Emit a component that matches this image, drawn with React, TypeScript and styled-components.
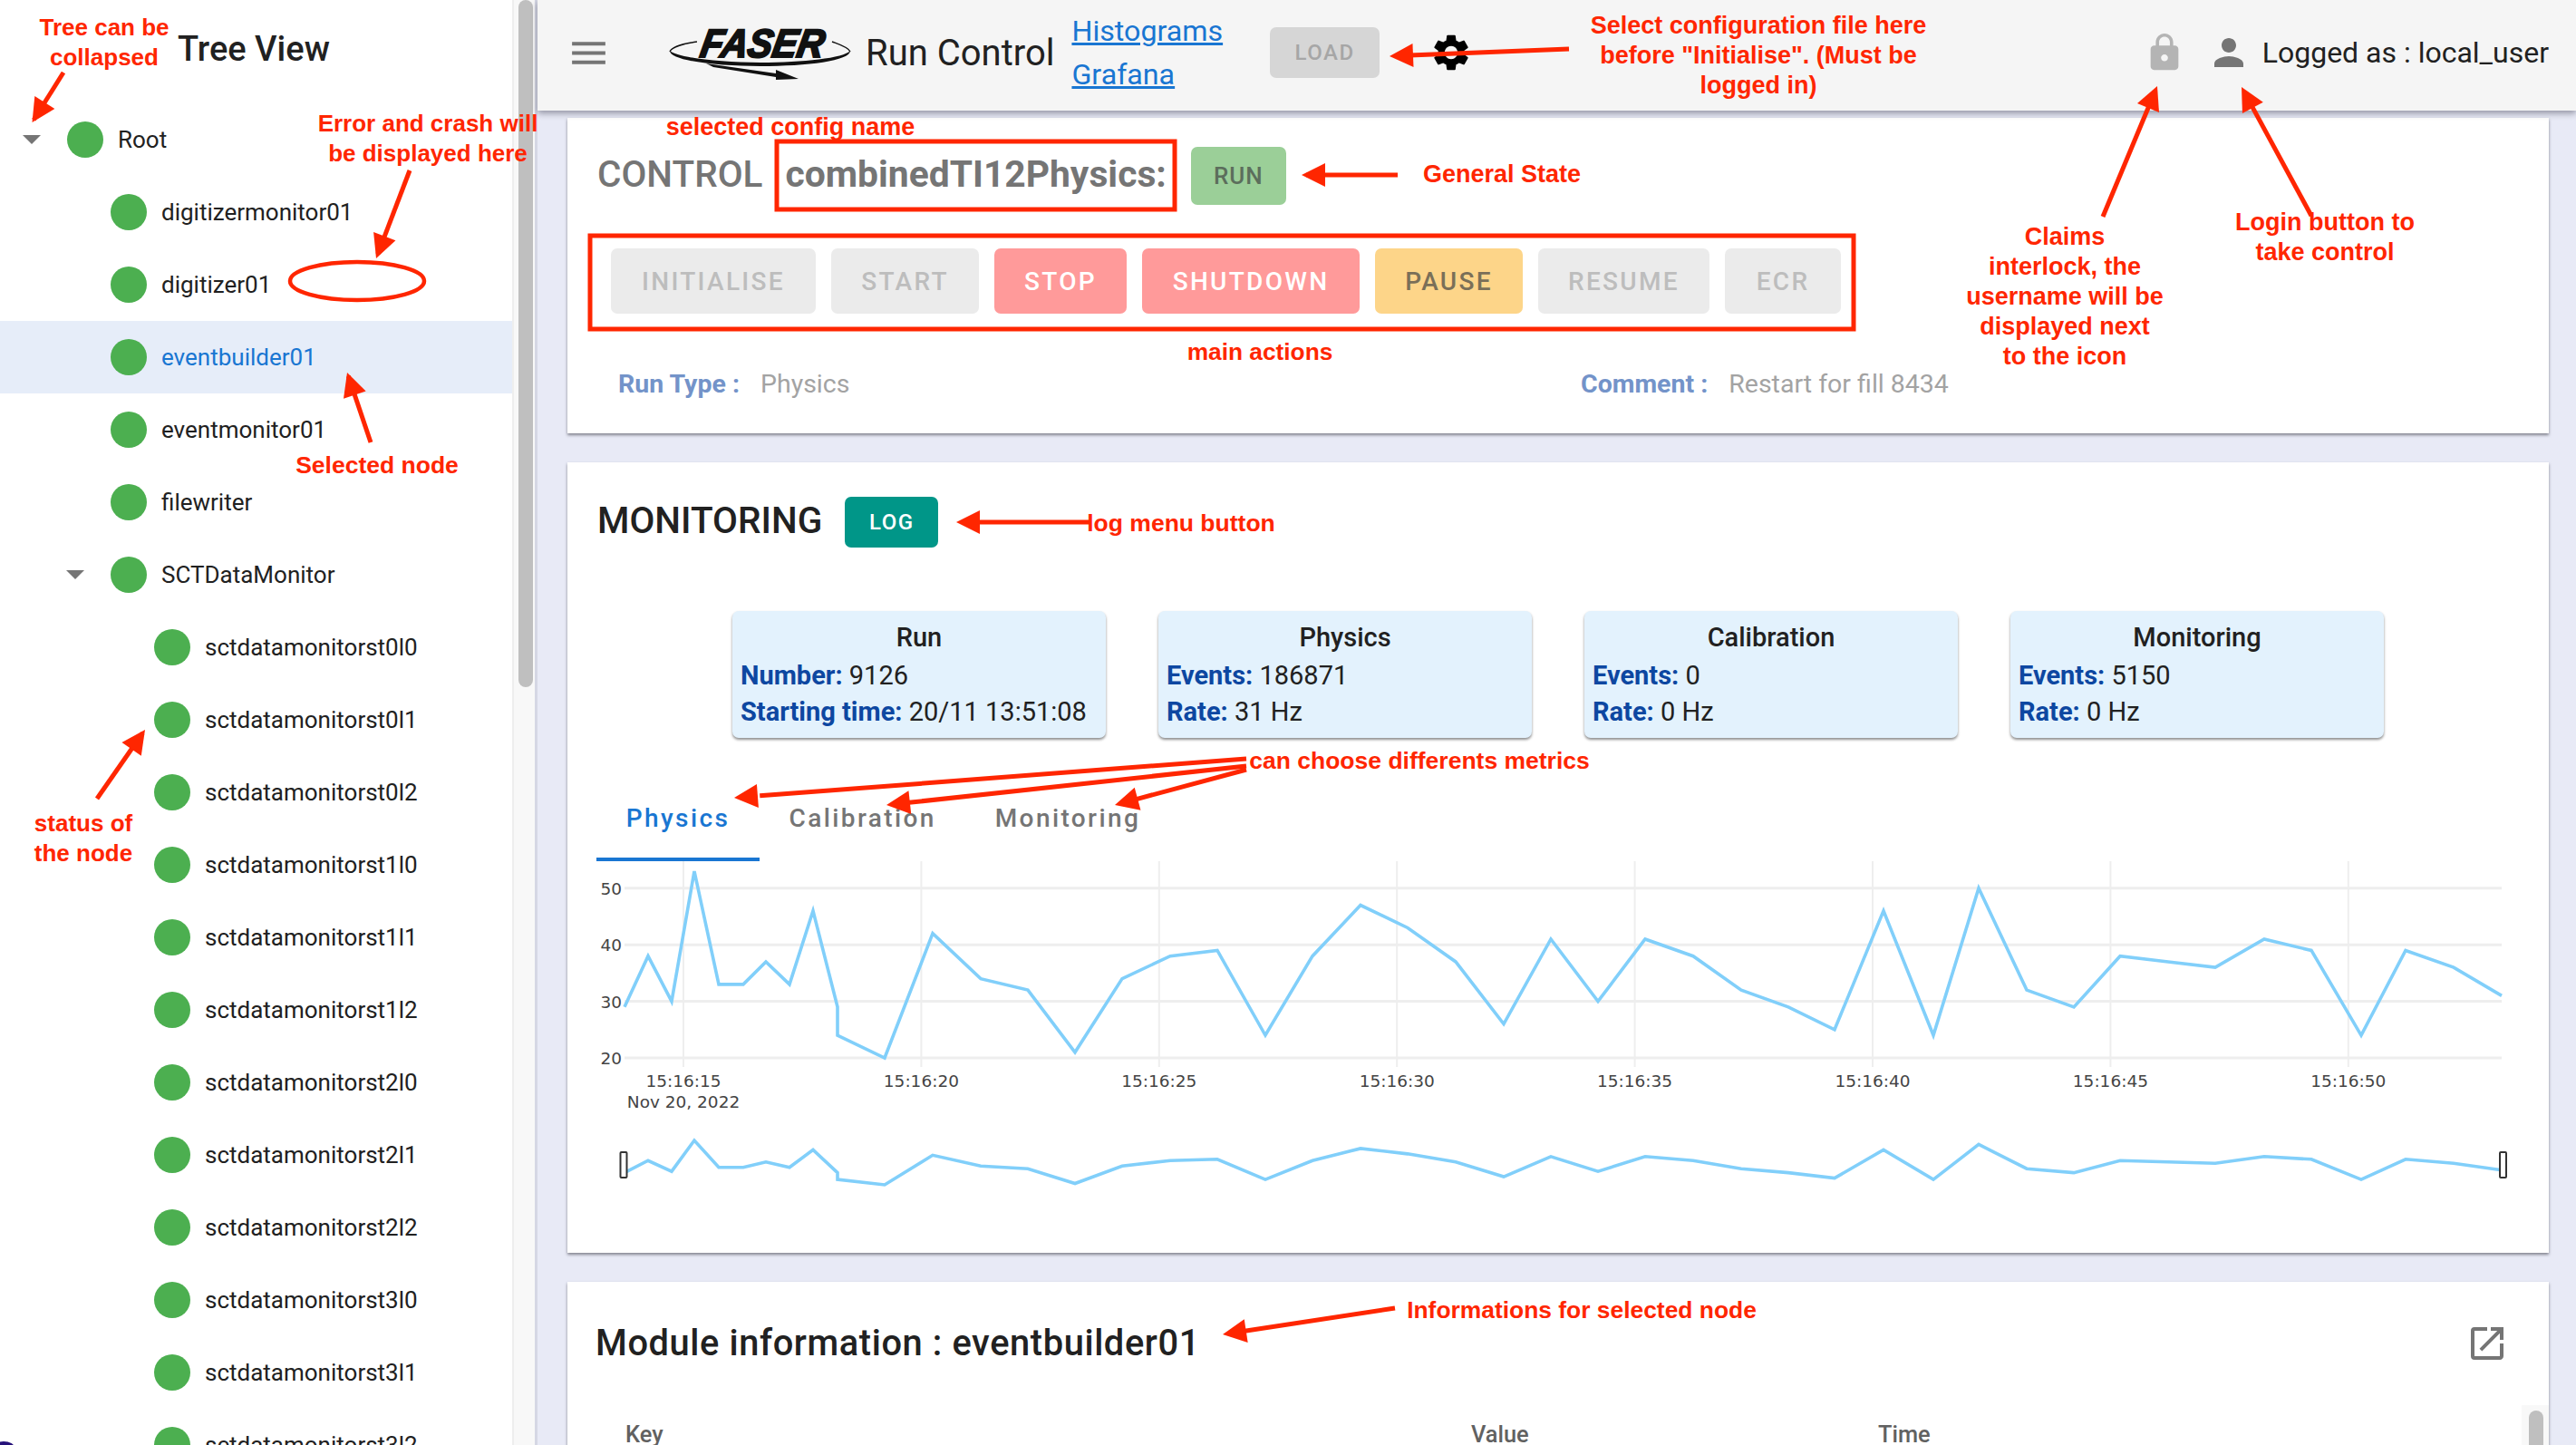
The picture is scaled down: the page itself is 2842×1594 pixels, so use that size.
import React from 'react';
import styled, { createGlobalStyle } from 'styled-components';
import { MdLock, MdMenu, MdOpenInNew, MdPerson, MdSettings } from 'react-icons/md';

const GlobalStyle = createGlobalStyle`
  html, body {
    margin: 0;
    width: 2842px;
    height: 1594px;
    overflow: hidden;
    background: #e8eaf6;
    font-family: Roboto, "Liberation Sans", sans-serif;
    color: #212121;
  }
  * { box-sizing: border-box; }
`;

const Page = styled.div`
  position: relative;
  display: flex;
  width: 2842px;
  height: 1594px;
  overflow: hidden;
`;

/* ---------- tree ---------- */

const Sidebar = styled.aside`
  display: flex;
  flex: none;
  width: 593px;
  background: #fff;
  border-right: 3px solid #d5d7e4;
`;

const TreePane = styled.div`
  width: 565px;
  flex: none;
`;

const TreeTitle = styled.h2`
  height: 114px;
  margin: 0;
  padding: 33px 0 0 196px;
  font-size: 38px;
  line-height: 42px;
  font-weight: 500;
`;

const TreeRow = styled.div<{ $level: number; $selected?: boolean }>`
  display: flex;
  align-items: center;
  height: 80px;
  padding-left: ${(p) => p.$level * 48}px;
  background: ${(p) => (p.$selected ? '#e6edf9' : 'transparent')};
  color: ${(p) => (p.$selected ? '#1976d2' : '#212121')};
  font-size: 26px;
  white-space: nowrap;
`;

const Expander = styled.span<{ $open?: boolean }>`
  flex: none;
  width: 74px;
  height: 0;
  display: flex;
  &::before {
    content: '';
    display: ${(p) => (p.$open ? 'block' : 'none')};
    margin: -5px 0 0 25px;
    border-left: 10px solid transparent;
    border-right: 10px solid transparent;
    border-top: 10px solid #757575;
  }
`;

const StatusDot = styled.span`
  flex: none;
  width: 40px;
  height: 40px;
  margin-right: 16px;
  border-radius: 50%;
  background: #4caf50;
`;

const ScrollTrack = styled.div`
  flex: none;
  width: 25px;
  padding: 0 2px 0 5px;
  background: #f8f8f8;
  border-left: 2px solid #eeeeee;
`;

const ScrollThumb = styled.div<{ $height: number }>`
  width: 16px;
  height: ${(p) => p.$height}px;
  border-radius: 8px;
  background: #bfbfbf;
`;

const CornerMark = styled.div`
  position: absolute;
  left: -8px;
  bottom: -10px;
  width: 24px;
  height: 14px;
  border-radius: 50%;
  background: #26127a;
`;

/* ---------- top bar ---------- */

const Main = styled.main`
  flex: 1;
  min-width: 0;
  display: flex;
  flex-direction: column;
`;

const TopBar = styled.header`
  position: relative;
  z-index: 2;
  flex: none;
  display: flex;
  align-items: center;
  height: 122px;
  padding: 0 30px 6px 32px;
  background: #f5f5f5;
  box-shadow: 0 3px 7px rgba(40, 40, 60, 0.45);
`;

const MenuIcon = styled(MdMenu)`
  flex: none;
  color: #757575;
`;

const Logo = styled.svg`
  flex: none;
  width: 215px;
  height: 65px;
  margin: 0 0 0 57px;
`;

const AppName = styled.span`
  margin-left: 9px;
  font-size: 40px;
  white-space: nowrap;
`;

const LinkStack = styled.nav`
  display: flex;
  flex-direction: column;
  gap: 12px;
  margin-left: 19px;
`;

const NavLink = styled.a`
  color: #1976d2;
  font-size: 32.2px;
  line-height: 36px;
  text-decoration: underline;
`;

const LoadButton = styled.button`
  width: 121px;
  height: 56px;
  margin-left: 52px;
  border: 0;
  border-radius: 7px;
  background: #d6d6d6;
  color: #a6a6a6;
  font: 500 24px Roboto, sans-serif;
  letter-spacing: 1.5px;
`;

const GearIcon = styled(MdSettings)`
  flex: none;
  margin-left: 55px;
  color: #000;
`;

const UserGroup = styled.div`
  display: flex;
  align-items: center;
  margin-left: auto;
`;

const LockIcon = styled(MdLock)`
  color: #b4b4b4;
`;

const PersonIcon = styled(MdPerson)`
  margin-left: 24px;
  color: #757575;
`;

const UserName = styled.span`
  margin-left: 13px;
  font-size: 32px;
  white-space: nowrap;
`;

/* ---------- cards ---------- */

const Content = styled.div`
  flex: 1;
  min-height: 0;
  display: flex;
  flex-direction: column;
  gap: 32px;
  padding: 8px 30px 0 33px;
`;

const Card = styled.section<{ $height?: number }>`
  flex: ${(p) => (p.$height ? 'none' : '1')};
  height: ${(p) => (p.$height ? `${p.$height}px` : 'auto')};
  background: #fff;
  box-shadow: 0 2px 3px rgba(30, 30, 40, 0.5);
`;

const TitleRow = styled.div<{ $top: number }>`
  display: flex;
  align-items: center;
  padding: ${(p) => p.$top}px 0 0 33px;
`;

const SectionTitle = styled.h2<{ $muted?: boolean }>`
  margin: 0;
  padding-bottom: 3px;
  font-size: 40.5px;
  line-height: 64px;
  font-weight: 500;
  color: ${(p) => (p.$muted ? '#757575' : '#212121')};
  white-space: nowrap;
`;

const ConfigName = styled.span`
  margin-left: 25px;
  padding-bottom: 3px;
  color: #757575;
  font-size: 40.8px;
  font-weight: 700;
  white-space: nowrap;
`;

const StateChip = styled.span`
  display: flex;
  align-items: center;
  justify-content: center;
  width: 105px;
  height: 64px;
  margin-left: 27px;
  border-radius: 7px;
  background: #9bcf98;
  color: #5c6e5c;
  font-size: 26px;
  font-weight: 500;
  letter-spacing: 1px;
`;

const ActionRow = styled.div`
  display: flex;
  gap: 17px;
  margin: 47px 0 0 48px;
`;

const toneColours = {
  off: ['#ebebeb', '#bdbdbd'],
  danger: ['#ff9a9a', '#ffffff'],
  warn: ['#fdd589', '#7a6f58'],
};

const ActionButton = styled.button<{ $tone: keyof typeof toneColours; $width: number }>`
  width: ${(p) => p.$width}px;
  height: 72px;
  padding: 0;
  border: 0;
  border-radius: 7px;
  background: ${(p) => toneColours[p.$tone][0]};
  color: ${(p) => toneColours[p.$tone][1]};
  font: 500 28px Roboto, sans-serif;
  letter-spacing: 2.3px;
`;

const MetaRow = styled.div`
  display: grid;
  grid-template-columns: 1062px 1fr;
  margin-top: 60px;
  padding-left: 56px;
  font-size: 28.5px;
  line-height: 36px;
`;

const MetaLabel = styled.b`
  margin-right: 23px;
  color: #7393c9;
  font-weight: 700;
`;

const MetaValue = styled.span`
  color: #a3a3a3;
`;

const LogButton = styled.button`
  width: 103px;
  height: 56px;
  margin-left: 25px;
  border: 0;
  border-radius: 7px;
  background: #009688;
  color: #fff;
  font: 500 24px Roboto, sans-serif;
  letter-spacing: 1.5px;
`;

const StatRow = styled.div`
  display: flex;
  justify-content: center;
  gap: 58px;
  margin-top: 65px;
`;

const StatCard = styled.div`
  width: 412px;
  height: 140px;
  padding: 9px 9px 0;
  border-radius: 7px;
  background: #e3f2fd;
  box-shadow: 0 2px 3px rgba(0, 0, 0, 0.45);
  font-size: 29px;
  line-height: 40px;
  white-space: nowrap;
`;

const StatTitle = styled.div`
  margin-bottom: 2px;
  text-align: center;
  font-weight: 500;
`;

const StatLabel = styled.b`
  color: #0d47a1;
  font-weight: 700;
`;

const TabBar = styled.div`
  display: flex;
  height: 96px;
  margin: 40px 0 0 32px;
`;

const Tab = styled.div<{ $active?: boolean }>`
  display: flex;
  align-items: center;
  justify-content: center;
  min-width: 180px;
  padding: 5px 32.5px 0;
  border-bottom: 4px solid ${(p) => (p.$active ? '#1976d2' : 'transparent')};
  color: ${(p) => (p.$active ? '#1976d2' : '#757575')};
  font-size: 28px;
  font-weight: 500;
  letter-spacing: 2.4px;
`;

const ChartSvg = styled.svg`
  display: block;
  width: 2186px;
  height: 431px;
`;

const ModuleHead = styled.div`
  display: flex;
  align-items: center;
  justify-content: space-between;
  padding: 43px 44px 0 31px;
`;

const ModuleTitle = styled.h2`
  margin: 0;
  font-size: 39.8px;
  line-height: 50px;
  font-weight: 500;
  letter-spacing: 0.6px;
`;

const OpenIcon = styled(MdOpenInNew)`
  color: #757575;
`;

const TableWrap = styled.div`
  display: flex;
  margin-top: 43px;
`;

const TableHead = styled.div`
  flex: 1;
  display: grid;
  grid-template-columns: 933px 449px 1fr;
  padding: 17px 0 0 64px;
  color: #616161;
  font-size: 25.4px;
  line-height: 30px;
  font-weight: 500;
`;

const TableTrack = styled.div`
  flex: none;
  width: 30px;
  height: 44px;
  padding: 6px 6px 0 8px;
  background: #f8f8f8;
`;

const TableThumb = styled.div`
  width: 16px;
  height: 60px;
  border-radius: 8px;
  background: #bfbfbf;
`;

/* ---------- red notes drawn over the page ---------- */

const Overlay = styled.svg`
  position: absolute;
  z-index: 3;
  top: 0;
  left: 0;
  width: 2842px;
  height: 1594px;
  pointer-events: none;
`;

const Note = styled.div<{ $x: number; $y: number; $size?: number }>`
  position: absolute;
  z-index: 4;
  left: ${(p) => p.$x}px;
  top: ${(p) => p.$y}px;
  transform: translate(-50%, -50%);
  color: #ff2600;
  font-family: "Liberation Sans", Arial, sans-serif;
  font-size: ${(p) => p.$size ?? 26}px;
  line-height: 33px;
  font-weight: 700;
  text-align: center;
  white-space: pre;
`;

const TREE: { name: string; level: number; open?: boolean; selected?: boolean }[] = [
  { name: 'Root', level: 0, open: true },
  { name: 'digitizermonitor01', level: 1 },
  { name: 'digitizer01', level: 1 },
  { name: 'eventbuilder01', level: 1, selected: true },
  { name: 'eventmonitor01', level: 1 },
  { name: 'filewriter', level: 1 },
  { name: 'SCTDataMonitor', level: 1, open: true },
  ...['0l0', '0l1', '0l2', '1l0', '1l1', '1l2', '2l0', '2l1', '2l2', '3l0', '3l1', '3l2'].map((s) => ({
    name: `sctdatamonitorst${s}`,
    level: 2,
  })),
];

const ACTIONS: { label: string; tone: keyof typeof toneColours; width: number }[] = [
  { label: 'INITIALISE', tone: 'off', width: 226 },
  { label: 'START', tone: 'off', width: 163 },
  { label: 'STOP', tone: 'danger', width: 146 },
  { label: 'SHUTDOWN', tone: 'danger', width: 240 },
  { label: 'PAUSE', tone: 'warn', width: 163 },
  { label: 'RESUME', tone: 'off', width: 189 },
  { label: 'ECR', tone: 'off', width: 128 },
];

const STATS = [
  { title: 'Run', rows: [['Number:', '9126'], ['Starting time:', '20/11 13:51:08']] },
  { title: 'Physics', rows: [['Events:', '186871'], ['Rate:', '31 Hz']] },
  { title: 'Calibration', rows: [['Events:', '0'], ['Rate:', '0 Hz']] },
  { title: 'Monitoring', rows: [['Events:', '5150'], ['Rate:', '0 Hz']] },
];

// [page x, rate]
const SERIES: [number, number][] = [
  [689, 29], [715, 38], [741, 30], [766, 53], [793, 33], [820, 33], [845, 37], [871, 33], [897, 46], [924, 29],
  [924, 24], [976, 20], [1029, 42], [1082, 34], [1134, 32], [1186, 21], [1238, 34], [1291, 38], [1343, 39],
  [1396, 24], [1448, 38], [1501, 47], [1553, 43], [1606, 37], [1659, 26], [1711, 41], [1763, 30], [1815, 41],
  [1868, 38], [1921, 32], [1973, 29], [2024, 25], [2078, 46], [2133, 24], [2183, 50], [2236, 32], [2288, 29],
  [2339, 38], [2392, 37], [2444, 36], [2498, 41], [2550, 39], [2605, 24], [2654, 39], [2707, 36], [2760, 31],
];

const Y_TICKS = [50, 40, 30, 20];
const X_TICKS = ['15:16:15', '15:16:20', '15:16:25', '15:16:30', '15:16:35', '15:16:40', '15:16:45', '15:16:50'];

const mainY = (v: number) => 1167 - (v - 20) * 6.24;
const miniY = (v: number) => 1307 - (v - 20) * 1.485;

const RateChart = () => {
  const mainLine = SERIES.map(([x, v]) => `${x},${mainY(v)}`).join(' ');
  const miniLine = SERIES.map(([x, v]) => `${x},${miniY(v)}`).join(' ');
  return (
    <ChartSvg viewBox="626 950 2186 431">
      {X_TICKS.map((t, i) => {
        const x = 754 + i * 262.4;
        return (
          <g key={t}>
            <line x1={x} x2={x} y1={950} y2={1177} stroke="#eeeeee" strokeWidth={2} />
            <text x={x} y={1199} textAnchor="middle" fontFamily="DejaVu Sans, sans-serif" fontSize={18.5} fill="#444">
              {t}
            </text>
          </g>
        );
      })}
      <text x={754} y={1222} textAnchor="middle" fontFamily="DejaVu Sans, sans-serif" fontSize={18.5} fill="#444">
        Nov 20, 2022
      </text>
      {Y_TICKS.map((v) => (
        <g key={v}>
          <line x1={689} x2={2760} y1={mainY(v)} y2={mainY(v)} stroke="#eeeeee" strokeWidth={3} />
          <text x={686} y={mainY(v) + 7} textAnchor="end" fontFamily="DejaVu Sans, sans-serif" fontSize={18.5} fill="#444">
            {v}
          </text>
        </g>
      ))}
      <polyline points={mainLine} fill="none" stroke="#81cffa" strokeWidth={3.6} />
      <polyline points={miniLine} fill="none" stroke="#81cffa" strokeWidth={3.6} />
      <rect x={684.5} y={1271} width={7} height={28} rx={1} fill="#fff" stroke="#333" strokeWidth={2} />
      <rect x={2758} y={1271} width={7} height={28} rx={1} fill="#fff" stroke="#333" strokeWidth={2} />
    </ChartSvg>
  );
};

const FaserLogo = () => (
  <Logo viewBox="730 25 215 65">
    <path d="M738 55C738 66 790 72 838 72 890 72 937 66 937 55 930 63 885 68 838 68 790 68 745 62 738 55Z" fill="#111" />
    <path d="M738 56C740 51 754 47 768 45M937 56C935 51 925 48 917 45" fill="none" stroke="#111" strokeWidth={1.4} />
    <path d="M778 69 855 80V76L880 86 855 87V84L786 73Z" fill="#111" />
    <text
      transform="translate(770 62) skewX(-10)"
      fontFamily="Liberation Sans, sans-serif"
      fontWeight={700}
      fontStyle="italic"
      fontSize={44}
      textLength={136}
      lengthAdjust="spacingAndGlyphs"
      fill="#111"
      stroke="#111"
      strokeWidth={2.2}
    >
      FASER
    </text>
  </Logo>
);

const ARROWS = [
  [70, 80, 35.5, 135],
  [452, 188, 415, 285],
  [409, 488, 383, 411],
  [107, 881, 160, 805],
  [1731, 54, 1533, 62],
  [1542, 193, 1436, 193],
  [2320, 239, 2380, 95],
  [2550, 238, 2473, 96],
  [1204, 576, 1055, 576],
  [1375, 837, 810, 880],
  [1375, 845, 978, 888],
  [1375, 849, 1230, 888],
  [1539, 1443, 1349, 1472],
];

const NOTES: { text: string; x: number; y: number; size?: number }[] = [
  { text: 'Tree can be\ncollapsed', x: 115, y: 47 },
  { text: 'Error and crash will\nbe displayed here', x: 472, y: 153 },
  { text: 'selected config name', x: 872, y: 140, size: 27 },
  { text: 'General State', x: 1657, y: 192, size: 27 },
  { text: 'main actions', x: 1390, y: 388, size: 26.3 },
  { text: 'Select configuration file here\nbefore "Initialise". (Must be\nlogged in)', x: 1940, y: 61, size: 27 },
  { text: 'Login button to\ntake control', x: 2565, y: 262, size: 27 },
  { text: 'Claims\ninterlock, the\nusername will be\ndisplayed next\nto the icon', x: 2278, y: 327, size: 27 },
  { text: 'Selected node', x: 416, y: 513, size: 26.5 },
  { text: 'status of\nthe node', x: 92, y: 925 },
  { text: 'log menu button', x: 1303, y: 577, size: 26.5 },
  { text: 'can choose differents metrics', x: 1566, y: 839, size: 26.5 },
  { text: 'Informations for selected node', x: 1745, y: 1445, size: 26.4 },
];

const arrowHead = (x1: number, y1: number, x2: number, y2: number) => {
  const len = Math.hypot(x2 - x1, y2 - y1);
  const ux = (x2 - x1) / len;
  const uy = (y2 - y1) / len;
  const bx = x2 - ux * 26;
  const by = y2 - uy * 26;
  return `${x2},${y2} ${bx - uy * 13},${by + ux * 13} ${bx + uy * 13},${by - ux * 13}`;
};

const Annotations = () => (
  <>
    <Overlay viewBox="0 0 2842 1594">
      {ARROWS.map(([x1, y1, x2, y2]) => (
        <g key={`${x1}-${y1}-${x2}`}>
          <line x1={x1} y1={y1} x2={x1 + (x2 - x1) * 0.95} y2={y1 + (y2 - y1) * 0.95} stroke="#ff2600" strokeWidth={5} />
          <polygon points={arrowHead(x1, y1, x2, y2)} fill="#ff2600" />
        </g>
      ))}
      <ellipse cx={394} cy={310} rx={74} ry={21} fill="none" stroke="#ff2600" strokeWidth={4.5} />
      <rect x={857} y={156} width={439} height={75} fill="none" stroke="#ff2600" strokeWidth={5} />
      <rect x={651} y={260} width={1394} height={103} fill="none" stroke="#ff2600" strokeWidth={5} />
    </Overlay>
    {NOTES.map((n) => (
      <Note key={n.text} $x={n.x} $y={n.y} $size={n.size}>
        {n.text}
      </Note>
    ))}
  </>
);

export default function App() {
  return (
    <Page>
      <GlobalStyle />
      <Sidebar>
        <TreePane>
          <TreeTitle>Tree View</TreeTitle>
          {TREE.map((node) => (
            <TreeRow key={node.name} $level={node.level} $selected={node.selected}>
              <Expander $open={node.open} />
              <StatusDot />
              {node.name}
            </TreeRow>
          ))}
        </TreePane>
        <ScrollTrack>
          <ScrollThumb $height={758} />
        </ScrollTrack>
      </Sidebar>
      <CornerMark />

      <Main>
        <TopBar>
          <MenuIcon size={49} />
          <FaserLogo />
          <AppName>Run Control</AppName>
          <LinkStack>
            <NavLink href="#histograms">Histograms</NavLink>
            <NavLink href="#grafana">Grafana</NavLink>
          </LinkStack>
          <LoadButton disabled>LOAD</LoadButton>
          <GearIcon size={48} />
          <UserGroup>
            <LockIcon size={46} />
            <PersonIcon size={48} />
            <UserName>Logged as : local_user</UserName>
          </UserGroup>
        </TopBar>

        <Content>
          <Card $height={348}>
            <TitleRow $top={30}>
              <SectionTitle $muted>CONTROL</SectionTitle>
              <ConfigName>combinedTI12Physics:</ConfigName>
              <StateChip>RUN</StateChip>
            </TitleRow>
            <ActionRow>
              {ACTIONS.map((a) => (
                <ActionButton key={a.label} $tone={a.tone} $width={a.width} disabled={a.tone === 'off'}>
                  {a.label}
                </ActionButton>
              ))}
            </ActionRow>
            <MetaRow>
              <div>
                <MetaLabel>Run Type :</MetaLabel>
                <MetaValue>Physics</MetaValue>
              </div>
              <div>
                <MetaLabel>Comment :</MetaLabel>
                <MetaValue>Restart for fill 8434</MetaValue>
              </div>
            </MetaRow>
          </Card>

          <Card $height={872}>
            <TitleRow $top={32}>
              <SectionTitle>MONITORING</SectionTitle>
              <LogButton>LOG</LogButton>
            </TitleRow>
            <StatRow>
              {STATS.map((s) => (
                <StatCard key={s.title}>
                  <StatTitle>{s.title}</StatTitle>
                  {s.rows.map(([label, value]) => (
                    <div key={label}>
                      <StatLabel>{label}</StatLabel> {value}
                    </div>
                  ))}
                </StatCard>
              ))}
            </StatRow>
            <TabBar>
              <Tab $active>Physics</Tab>
              <Tab>Calibration</Tab>
              <Tab>Monitoring</Tab>
            </TabBar>
            <RateChart />
          </Card>

          <Card>
            <ModuleHead>
              <ModuleTitle>Module information : eventbuilder01</ModuleTitle>
              <OpenIcon size={48} />
            </ModuleHead>
            <TableWrap>
              <TableHead>
                <span>Key</span>
                <span>Value</span>
                <span>Time</span>
              </TableHead>
              <TableTrack>
                <TableThumb />
              </TableTrack>
            </TableWrap>
          </Card>
        </Content>
      </Main>

      <Annotations />
    </Page>
  );
}
